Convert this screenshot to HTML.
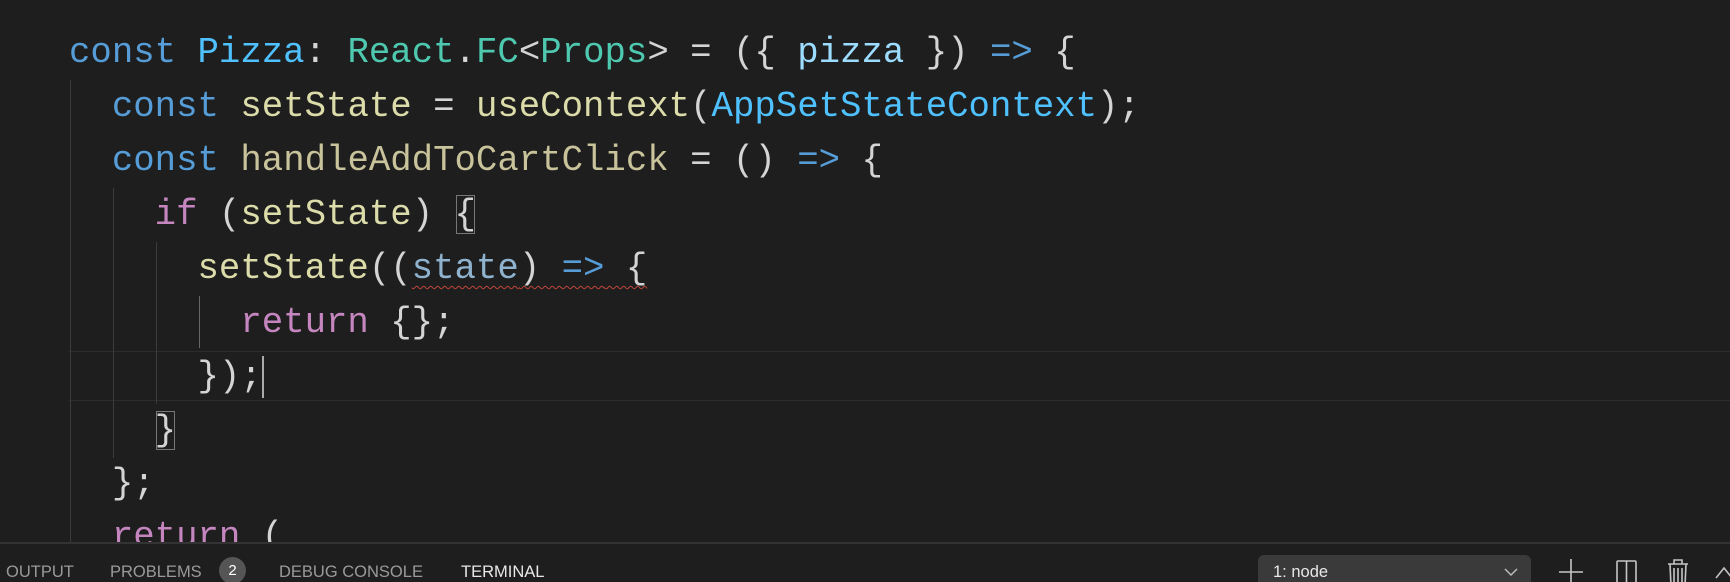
<!DOCTYPE html>
<html><head><meta charset="utf-8"><style>
html,body{margin:0;padding:0;background:#1e1e1e;width:1730px;height:580px;overflow:hidden}
.ed{position:absolute;left:0;top:0;width:1730px;height:542px;overflow:hidden;font-family:"Liberation Mono",monospace;font-size:35.7px;color:#d4d4d4}
.ln{position:absolute;left:69px;height:54px;line-height:54px;white-space:pre}
.k{color:#569cd6}.c{color:#4fc1ff}.t{color:#4ec9b0}.f{color:#dcdcaa}.g{color:#c8c39b}.p{color:#c586c0}.v{color:#8fb3cf}
.guide{position:absolute;width:1px;background:#3c3c3c}
.cur{position:absolute;left:69px;right:0;top:351px;height:48px;border-top:1px solid #2c2c2c;border-bottom:1px solid #2c2c2c}
.panel{position:absolute;left:0;top:542px;width:1730px;height:38px;border-top:2px solid #333;background:#1e1e1e;font-family:"Liberation Sans",sans-serif;font-size:16.5px;color:#9a9a9a;overflow:hidden}
.tab{position:absolute;top:19px}
</style></head><body>
<div class="ed">
<div class="cur"></div>
<div class="guide" style="left:70px;top:80px;height:470px"></div>
<div class="guide" style="left:113px;top:188px;height:270px"></div>
<div class="guide" style="left:156px;top:242px;height:162px"></div>
<div class="guide" style="left:199px;top:296px;height:52px;background:#666"></div>
<div class="ln" style="top:26px"><span class="k">const</span> <span class="c">Pizza</span>: <span class="t">React</span>.<span class="t">FC</span>&lt;<span class="t">Props</span>&gt; = ({ <span style="color:#9cdcfe">pizza</span> }) <span class="k">=&gt;</span> {</div>
<div class="ln" style="top:80px">  <span class="k">const</span> <span class="f">setState</span> = <span class="f">useContext</span>(<span class="c">AppSetStateContext</span>);</div>
<div class="ln" style="top:134px">  <span class="k">const</span> <span class="g">handleAddToCartClick</span> = () <span class="k">=&gt;</span> {</div>
<div class="ln" style="top:188px">    <span class="p">if</span> (<span class="f">setState</span>) <span style="outline:1px solid #777;outline-offset:-2px">{</span></div>
<div class="ln" style="top:242px">      <span class="f">setState</span>((<span style="text-decoration:underline wavy #c0453a;text-decoration-thickness:1px;text-underline-offset:7px"><span class="v">state</span>) <span class="k">=&gt;</span> {</span></div>
<div class="ln" style="top:296px">        <span class="p">return</span> {};</div>
<div class="ln" style="top:350px">      });<span style="display:inline-block;width:2px;height:42px;background:#aaa;vertical-align:middle"></span></div>
<div class="ln" style="top:404px">    <span style="outline:1px solid #777;outline-offset:-2px">}</span></div>
<div class="ln" style="top:457px">  };</div>
<div class="ln" style="top:510px">  <span class="p">return</span> (</div>
</div>
<div class="panel">
<span class="tab" style="left:6px">OUTPUT</span>
<span class="tab" style="left:110px">PROBLEMS</span>
<span style="position:absolute;left:219px;top:13px;width:27px;height:27px;border-radius:14px;background:#555;color:#fff;text-align:center;line-height:27px;font-size:15px">2</span>
<span class="tab" style="left:279px">DEBUG CONSOLE</span>
<span class="tab" style="left:461px;color:#e8e8e8">TERMINAL</span>
<div style="position:absolute;left:1258px;top:11px;width:273px;height:40px;background:#3a3a3a;border-radius:6px;color:#e8e8e8"><span style="position:absolute;left:15px;top:8px">1: node</span>
<svg style="position:absolute;right:12px;top:12px" width="16" height="10"><path d="M2 2l6 6 6-6" stroke="#bbb" stroke-width="1.5" fill="none"/></svg></div>
<svg style="position:absolute;left:1558px;top:12px" width="172" height="30" fill="none" stroke="#c5c5c5" stroke-width="1.6">
<path d="M13 3v27M1 16h24"/>
<rect x="59" y="5" width="19" height="25" rx="1"/><path d="M68.5 5v25"/>
<path d="M110 8h20M116 8V4h8v4M112 8l1 22h14l1-22M116 12v14M120 12v14M124 12v14"/>
<path d="M158 22l8-10 8 10"/>
</svg>
</div>
</body></html>
